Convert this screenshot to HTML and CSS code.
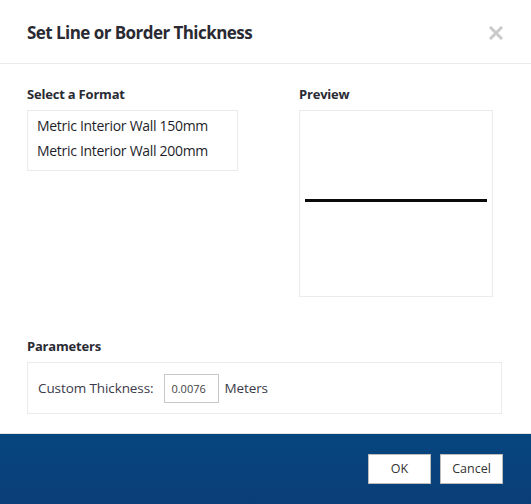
FILE: index.html
```html
<!DOCTYPE html>
<html>
<head>
<meta charset="utf-8">
<link rel="stylesheet" href="styles.css">
</head>
<body>
<div class="dialog">
  <div class="header">
    <h1 class="title">Set Line or Border Thickness</h1>
    <svg class="close" width="14" height="14" viewBox="0 0 14 14"><path d="M2 2 L12 12 M12 2 L2 12" stroke="#cacaca" stroke-width="3" stroke-linecap="square"/></svg>
  </div>
  <div class="content">
    <div class="columns">
      <div class="col-left">
        <div class="label">Select a Format</div>
        <div class="list">
          <div class="item">Metric Interior Wall 150mm</div>
          <div class="item">Metric Interior Wall 200mm</div>
        </div>
      </div>
      <div class="col-right">
        <div class="label">Preview</div>
        <div class="preview"><div class="line"></div></div>
      </div>
    </div>
    <div class="label params-label">Parameters</div>
    <div class="params">
      <span class="plabel">Custom Thickness:</span>
      <span class="input">0.0076</span>
      <span class="plabel">Meters</span>
    </div>
  </div>
  <div class="footer">
    <button class="btn btn-ok">OK</button>
    <button class="btn">Cancel</button>
  </div>
</div>
</body>
</html>
```
FILE: styles.css
```css
html, body { margin: 0; padding: 0; background: #fff; }
body { font-family: "Open Sans", "Noto Sans", sans-serif; color: #1e1e2a; }
.dialog { width: 531px; height: 504px; display: flex; flex-direction: column; }
.header {
  height: 63px; border-bottom: 1px solid #ebebeb; box-sizing: content-box;
  display: flex; align-items: center; justify-content: space-between;
  padding: 0 28px 0 27px;
}
.title { margin: 2px 0 0; font-size: 17px; font-weight: 700; color: #2a2a33; letter-spacing: -0.55px; }
.close { margin-top: 3px; }
.content { flex: 1; padding: 22px 29px 0 27px; }
.columns { display: flex; gap: 61px; }
.col-left { width: 211px; }
.col-right { width: 194px; }
.label { font-size: 13px; font-weight: 700; color: #2a2a33; line-height: 16px; height: 16px; margin-bottom: 8px; letter-spacing: -0.2px; }
.list { border: 1px solid #ebebeb; height: 57px; padding-top: 2px; box-sizing: content-box; }
.item { font-size: 14px; line-height: 25px; padding-left: 9px; color: #1e1e2a; letter-spacing: -0.3px; }
.preview { border: 1px solid #ebebeb; height: 185px; display: flex; align-items: flex-start; padding: 0 5px; }
.line { flex: 1; height: 3px; background: #0a0a0a; margin-top: 88px; }
.params-label { margin-top: 41px; }
.params {
  border: 1px solid #ebebeb; height: 50px; display: flex; align-items: center;
  padding-left: 10px;
}
.plabel { font-size: 13.5px; color: #3a3a48; letter-spacing: -0.1px; }
.input {
  width: 55px; height: 29px; border: 1px solid #c8c8c8; box-sizing: border-box;
  font-size: 11px; color: #444; display: flex; align-items: center; padding-left: 6px;
  margin: 0 5px 0 11px;
}
.footer {
  height: 70px; border-top: 1px solid #e4e4e4; background: linear-gradient(#06467f, #0b3e78);
  display: flex; align-items: center; justify-content: flex-end; gap: 9px; padding-right: 28px; margin-top: auto;
}
.btn {
  width: 63px; height: 30px; background: #fff; border: 1px solid #bcbcbc; border-radius: 0;
  font-family: "Open Sans", "Noto Sans", sans-serif; font-size: 12.5px; color: #333; padding: 0; margin-top: -1px;
}
```
